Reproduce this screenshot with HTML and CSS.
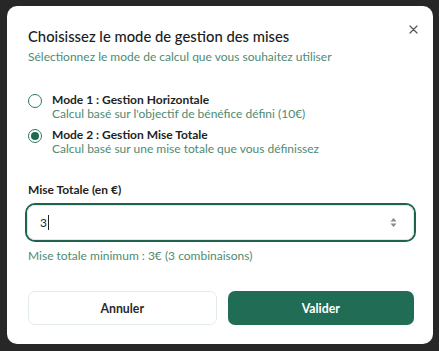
FILE: index.html
```html
<!DOCTYPE html>
<html lang="fr">
<head>
    <meta charset="UTF-8">
    <meta name="viewport" content="width=device-width, initial-scale=1.0">
    <title>Mode de gestion des mises</title>
    <link rel="stylesheet" href="styles.css">
</head>
<body>
    <div class="modal">
        <button class="close" aria-label="Fermer">
            <svg width="9" height="9" viewBox="0 0 9 9"><path d="M1 1L8 8M8 1L1 8" stroke="#555" stroke-width="1.2" stroke-linecap="round"/></svg>
        </button>
        <h2 class="title">Choisissez le mode de gestion des mises</h2>
        <p class="subtitle">Sélectionnez le mode de calcul que vous souhaitez utiliser</p>

        <div class="options">
            <label class="option">
                <span class="radio"></span>
                <span class="option-text">
                    <span class="option-title">Mode 1 : Gestion Horizontale</span>
                    <span class="option-desc">Calcul basé sur l'objectif de bénéfice défini (10€)</span>
                </span>
            </label>
            <label class="option">
                <span class="radio checked"></span>
                <span class="option-text">
                    <span class="option-title">Mode 2 : Gestion Mise Totale</span>
                    <span class="option-desc">Calcul basé sur une mise totale que vous définissez</span>
                </span>
            </label>
        </div>

        <div class="field">
            <div class="field-label">Mise Totale (en €)</div>
            <div class="input">
                <span class="value">3</span><span class="caret"></span>
                <svg class="spin" width="7" height="11" viewBox="0 0 7 11"><path d="M3.5 1L6.5 4.5H0.5Z M3.5 10L6.5 6.5H0.5Z" fill="#8a8a8a"/></svg>
            </div>
            <div class="hint">Mise totale minimum : 3€ (3 combinaisons)</div>
        </div>

        <div class="actions">
            <button class="btn btn-cancel">Annuler</button>
            <button class="btn btn-ok">Valider</button>
        </div>
    </div>
</body>
</html>
```

FILE: styles.css
```css
html, body {
    margin: 0;
    height: 100%;
}

body {
    background-color: #272727;
    padding: 6px 6px 0 7px;
    box-sizing: border-box;
    font-family: Lato, "Noto Sans", sans-serif;
    font-size: 12px;
    color: #1f1f1f;
}

.modal {
    position: relative;
    width: 426px;
    height: 338px;
    box-sizing: border-box;
    background-color: #fff;
    border-radius: 10px;
    padding: 20px 19px 0 21px;
}

.close {
    position: absolute;
    top: 16px;
    right: 13px;
    width: 14px;
    height: 14px;
    padding: 0;
    border: none;
    background: none;
    display: flex;
    align-items: center;
    justify-content: center;
}

.title {
    margin: 0;
    font-size: 14.8px;
    font-weight: 500;
    line-height: 20px;
    color: #1c1c1c;
}

.subtitle {
    margin: 3px 0 0;
    line-height: 16px;
    color: #4f8a72;
}

.options {
    margin-top: 28px;
    display: flex;
    flex-direction: column;
    gap: 7px;
}

.option {
    display: flex;
    align-items: flex-start;
    gap: 10px;
}

.radio {
    margin-top: 1px;
    width: 14px;
    height: 14px;
    box-sizing: border-box;
    border: 1.5px solid #2d7a62;
    border-radius: 50%;
    flex-shrink: 0;
    display: flex;
    align-items: center;
    justify-content: center;
}

.radio.checked::after {
    content: "";
    width: 8px;
    height: 8px;
    border-radius: 50%;
    background-color: #1e6a52;
}

.option-text {
    display: flex;
    flex-direction: column;
}

.option-title {
    font-weight: 700;
    line-height: 14px;
}

.option-desc {
    line-height: 14px;
    color: #4f8a72;
}

.field {
    margin-top: 26px;
}

.field-label {
    font-weight: 700;
    line-height: 16px;
}

.input {
    margin: 7px 0 0 -1px;
    height: 35px;
    box-sizing: border-box;
    border: 1px solid #e2e8e6;
    border-radius: 8px;
    box-shadow: 0 0 0 2px #1f6250;
    display: flex;
    align-items: center;
    padding: 0 16px 0 12px;
}

.caret {
    width: 1px;
    height: 15px;
    background-color: #222;
    margin-left: 1px;
}

.spin {
    margin-left: auto;
}

.hint {
    margin-top: 8px;
    line-height: 16px;
    color: #4f8a72;
}

.actions {
    margin-top: 27px;
    display: flex;
    gap: 11px;
}

.btn {
    flex: 1;
    height: 34px;
    border-radius: 7px;
    font-family: Lato, sans-serif;
    font-size: 12.3px;
    font-weight: 700;
    cursor: pointer;
}

.btn-cancel {
    background-color: #fff;
    border: 1px solid #e3ecea;
    color: #2a2a2a;
}

.btn-ok {
    background-color: #216c55;
    border: none;
    color: #fff;
}
```
